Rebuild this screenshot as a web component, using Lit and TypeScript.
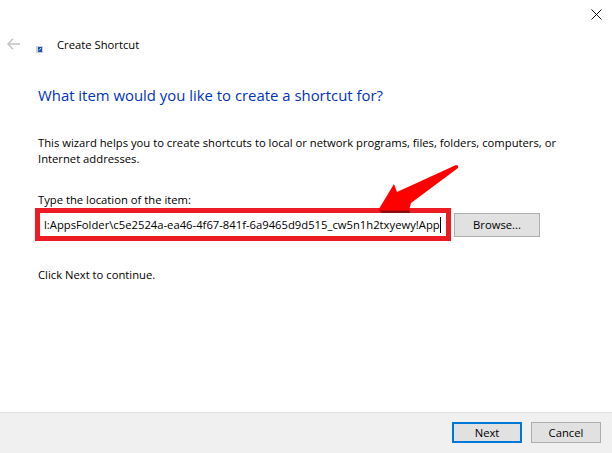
import { LitElement, html, css } from "lit";
import { customElement } from "lit/decorators.js";

@customElement("app-root")
export class AppRoot extends LitElement {
  static styles = css`
    :host { display: block; width: 612px; height: 453px; background: #fff; font-family: "Open Sans", "Noto Sans", sans-serif; color: #000; font-size: 11.25px; position: relative; overflow: hidden; }
    .page { height: 453px; display: flex; flex-direction: column; }
    .close { display: flex; justify-content: flex-end; padding: 9px 10px 0 0; height: 21px; box-sizing: border-box; }
    .title { display: flex; align-items: flex-start; height: 39px; padding-left: 7px; }
    .back { margin-top: 17px; margin-right: 16px; }
    .shield { margin-top: 25px; margin-right: 14px; }
    .title-text { margin-top: 16px; line-height: 16px; }
    .content { flex: 1; padding: 24px 0 0 38px; display: flex; flex-direction: column; }
    h1 { margin: 0; font-weight: 400; font-size: 14.9px; line-height: 22px; color: #0033bc; }
    .desc { margin: 29px 0 0; line-height: 16px; width: 530px; }
    .label { margin-top: 25px; line-height: 16px; }
    .row { display: flex; align-items: center; margin: 0 0 0 -3px; }
    .field { width: 416px; height: 33px; box-sizing: border-box; border: 5px solid #ed1c24; background: #fff; display: flex; align-items: center; padding: 0 5px 0 4px; }
    .value { flex: 1; white-space: nowrap; line-height: 16px; }
    .caret { width: 1px; height: 16px; background: #000; flex: none; }
    .btn { box-sizing: border-box; width: 86px; height: 24px; background: #e1e1e1; border: 1.5px solid #adadad; display: flex; align-items: center; justify-content: center; }
    .browse { margin-left: 3px; }
    .hint { margin: 26px 0 0; line-height: 16px; }
    .footer { height: 41px; box-sizing: border-box; background: #f0f0f0; border-top: 1px solid #dfdfdf; display: flex; justify-content: flex-end; padding: 9px 11px 0 0; gap: 9px; }
    .footer .btn { width: 70px; height: 21px; }
    .footer .primary { border: 2px solid #0078d7; }
    .arrow { position: absolute; left: 370px; top: 160px; }
  `;
  render() {
    return html`
      <div class="page">
        <div class="close">
          <svg width="11" height="11" viewBox="0 0 11 11"><path d="M.5.5l10 10M10.5.5l-10 10" stroke="#111" stroke-width="1" fill="none"/></svg>
        </div>
        <div class="title">
          <svg class="back" width="13" height="12" viewBox="0 0 13 12"><path d="M6 .8L1 6l5 5.2M1 6h12" stroke="#c4c4c4" stroke-width="1.6" fill="none"/></svg>
          <svg class="shield" width="7" height="7" viewBox="0 0 7 7"><rect width="7" height="7" fill="#cdd3dc"/><rect x="2" y="1" width="4" height="5" fill="#1f4fa8"/><path d="M3 4.500L5 2" stroke="#fff" stroke-width=".8"/></svg>
          <div class="title-text">Create Shortcut</div>
        </div>
        <div class="content">
          <h1>What item would you like to create a shortcut for?</h1>
          <p class="desc">This wizard helps you to create shortcuts to local or network programs, files, folders, computers, or Internet addresses.</p>
          <div class="label">Type the location of the item:</div>
          <div class="row">
            <div class="field"><div class="value">l:AppsFolder\\c5e2524a-ea46-4f67-841f-6a9465d9d515_cw5n1h2txyewy!App</div><span class="caret"></span></div>
            <div class="btn browse">Browse...</div>
          </div>
          <p class="hint">Click Next to continue.</p>
        </div>
        <div class="footer">
          <div class="btn primary">Next</div>
          <div class="btn">Cancel</div>
        </div>
      </div>
      <svg class="arrow" width="95" height="55" viewBox="370 160 95 55"><path d="M378 209L409 209L410 213L382 213Z" fill="#8c0d12"/><path d="M378 210.500L394 184L397 192L456 165Q459 165 458 168L411 203L409 210.500Z" fill="#f00"/></svg>
    `;
  }
}
